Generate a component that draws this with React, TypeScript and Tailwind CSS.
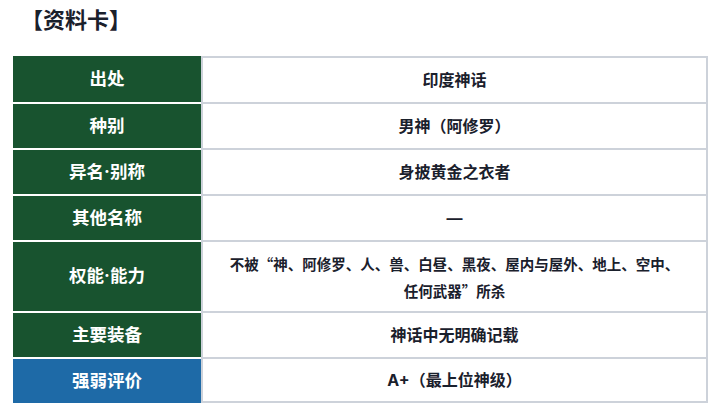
import React from "react";

type Row = {
  label: string;
  value: React.ReactNode;
  tall?: boolean;
  blue?: boolean;
};

const rows: Row[] = [
  { label: "出处", value: "印度神话" },
  { label: "种别", value: "男神（阿修罗）" },
  { label: "异名·别称", value: "身披黄金之衣者" },
  { label: "其他名称", value: "—" },
  {
    label: "权能·能力",
    value: (
      <>
        不被“神、阿修罗、人、兽、白昼、黑夜、屋内与屋外、地上、空中、
        <br />
        任何武器”所杀
      </>
    ),
    tall: true,
  },
  { label: "主要装备", value: "神话中无明确记载" },
  { label: "强弱评价", value: "A+（最上位神级）", blue: true },
];

export default function App() {
  return (
    <div
      className="w-[720px] h-[416px] bg-white overflow-hidden"
      style={{ fontFamily: 'Inter, "Noto Sans CJK SC", sans-serif' }}
    >
      <h2 className="pl-[21px] pt-[5px] h-[56px] text-[22px] font-bold leading-[30px] text-[#1a202c]">
        【资料卡】
      </h2>

      <div className="ml-[13px] w-[695px] flex flex-col">
        {rows.map((r, i) => (
          <div key={r.label} className={`flex ${r.tall ? "h-[71px]" : "h-[46px]"}`}>
            <div
              className={`w-[188px] flex items-center justify-center text-white text-[17.5px] font-bold ${
                i > 0 ? "border-t-2 border-white" : ""
              } ${r.blue ? "bg-[#1e6aa7]" : "bg-[#18532f]"}`}
            >
              {r.label}
            </div>
            <div
              className={`flex-1 flex items-center justify-center text-center font-bold text-[#1a202c] border-t-2 border-x-2 border-[#cdd2da] ${
                i === rows.length - 1 ? "border-b-2" : ""
              } ${r.tall ? "text-[14.5px] leading-[27px] font-['Noto_Sans_CJK_SC',sans-serif]" : "text-[16px]"}`}
            >
              <div>{r.value}</div>
            </div>
          </div>
        ))}
      </div>
    </div>
  );
}
